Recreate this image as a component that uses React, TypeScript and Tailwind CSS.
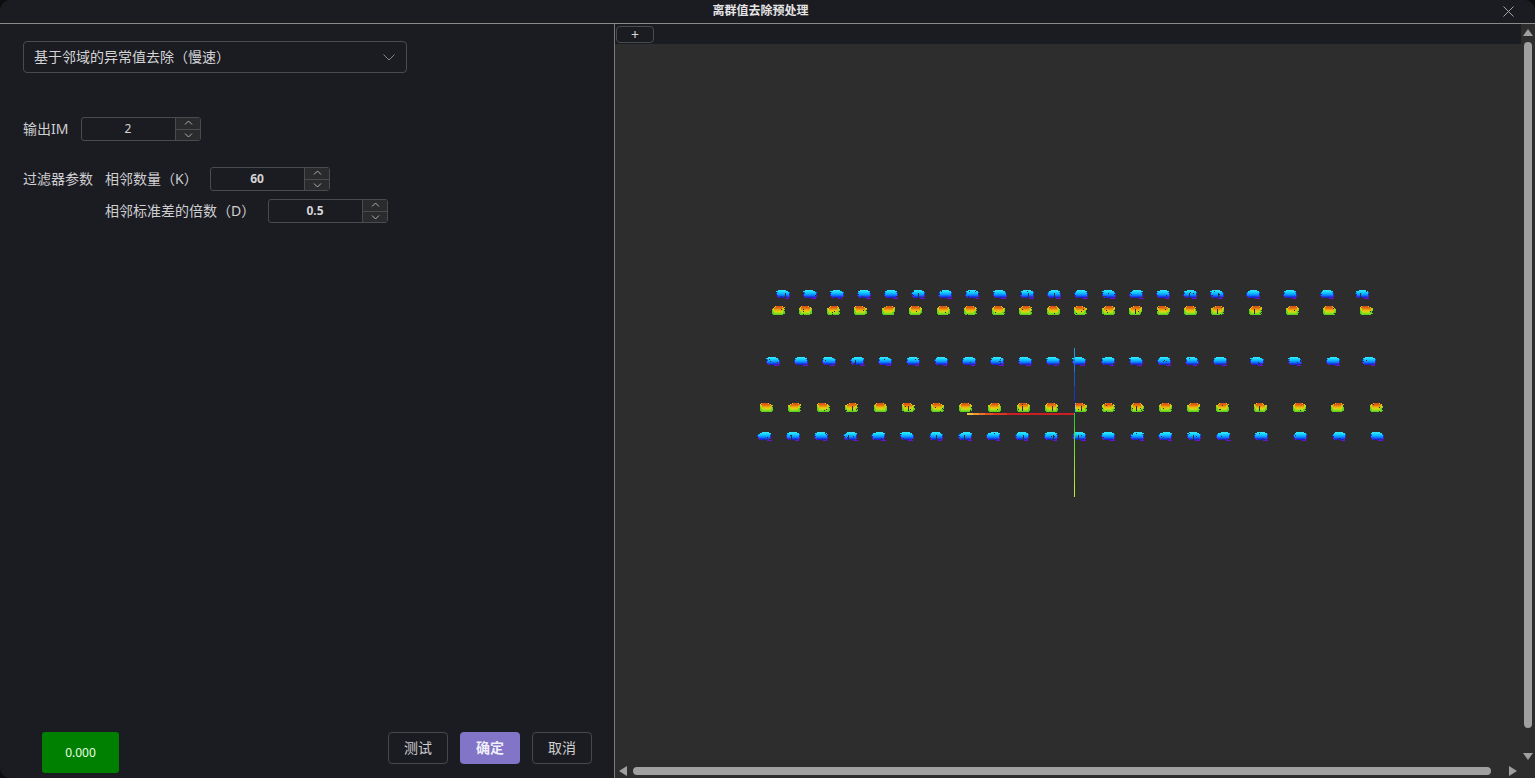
import React from "react";

const F = { fontFamily: '"Noto Sans", "Noto Sans CJK SC", sans-serif' };

const rows: { y: number; kind: "blue" | "orange"; xs: number[] }[] = [
  { y: 290, kind: "blue", xs: [783, 810, 837, 864, 891, 918, 945, 972, 1000, 1027, 1054, 1081, 1109, 1136, 1163, 1190, 1217, 1253, 1290, 1327, 1362] },
  { y: 306, kind: "orange", xs: [778, 805, 833, 860, 888, 915, 943, 970, 998, 1025, 1053, 1080, 1108, 1135, 1163, 1190, 1217, 1255, 1292, 1329, 1366] },
  { y: 357, kind: "blue", xs: [773, 801, 829, 857, 885, 913, 941, 969, 997, 1025, 1053, 1079, 1108, 1136, 1164, 1192, 1220, 1257, 1295, 1333, 1369] },
  { y: 403, kind: "orange", xs: [766, 794, 823, 851, 880, 908, 937, 965, 994, 1023, 1051, 1080, 1108, 1137, 1165, 1193, 1222, 1260, 1299, 1337, 1376] },
  { y: 432, kind: "blue", xs: [764, 793, 821, 850, 878, 907, 936, 965, 993, 1022, 1051, 1079, 1108, 1137, 1165, 1194, 1223, 1261, 1300, 1339, 1377] },
];

const blueColors = ["#30e4ff", "#20dcff", "#14ccff", "#10b4ff", "#0c98ff", "#0c74f8", "#1048e0", "#2420c8", "#6a14d0"];
const orangeColors = ["#d85414", "#dc6012", "#e47a10", "#ea9a10", "#eabc10", "#d8d010", "#b4dc18", "#88dc20", "#60d020"];
const blueWidths = [8, 12, 13, 14, 14, 14, 13, 11, 5];
const orangeWidths = [8, 11, 13, 13, 13, 13, 13, 13, 11];

function prng(seed: number) {
  let s = seed >>> 0;
  return () => {
    s = (s + 0x6d2b79f5) >>> 0;
    let t = Math.imul(s ^ (s >>> 15), 1 | s);
    t = (t + Math.imul(t ^ (t >>> 7), 61 | t)) ^ t;
    return ((t ^ (t >>> 14)) >>> 0) / 4294967296;
  };
}

function Blob({ cx, y, kind, seed }: { cx: number; y: number; kind: "blue" | "orange"; seed: number }) {
  const r = prng(seed);
  const colors = kind === "blue" ? blueColors : orangeColors;
  const widths = kind === "blue" ? blueWidths : orangeWidths;
  const skew = Math.round(r() * 2 - 1);
  const gap = r() < 0.3 ? Math.round(r() * 4 - 2) : 99;
  const rects: React.ReactNode[] = [];
  widths.forEach((w, row) => {
    const ww = w - (r() < 0.3 ? 1 : 0);
    const last = row === widths.length - 1;
    const left = cx - Math.floor(ww / 2) + (last && kind === "blue" ? 4 + skew : row <= 1 ? skew : 0);
    for (let i = 0; i < ww; i++) {
      const x = left + i;
      if (x - cx === gap && row > 2 && row < 8) continue;
      if (row > 0 && r() < 0.015) continue;
      const edge = Math.min(i, ww - 1 - i);
      let idx = row;
      if (kind === "orange" && edge < 1) idx = Math.min(8, row + 4);
      if (kind === "orange" && edge === 1 && row > 1) idx = Math.min(8, row + 2);
      if (kind === "blue" && edge < 1 && row > 1) idx = Math.min(8, row + 3);
      rects.push(<rect key={`${row}-${i}`} x={x} y={y + row} width={1} height={1} fill={colors[idx]} />);
    }
  });
  return <g>{rects}</g>;
}

const xAxis = [
  { x: 967, w: 6, c: "#f0c040" },
  { x: 973, w: 6, c: "#ec9a30" },
  { x: 979, w: 6, c: "#e87428" },
  { x: 985, w: 8, c: "#e05020" },
  { x: 993, w: 14, c: "#d83820" },
  { x: 1007, w: 67, c: "#c82020" },
];
const zAxis = [
  { y: 348, h: 12, c: "#2098e0" },
  { y: 360, h: 12, c: "#1878d8" },
  { y: 372, h: 14, c: "#1458d0" },
  { y: 386, h: 14, c: "#1438c8" },
  { y: 400, h: 13, c: "#1420c0" },
];
const yAxis = [
  { y: 413, h: 14, c: "#30cc30" },
  { y: 427, h: 14, c: "#50d430" },
  { y: 441, h: 14, c: "#70dc30" },
  { y: 455, h: 14, c: "#88e030" },
  { y: 469, h: 14, c: "#a0e630" },
  { y: 483, h: 14, c: "#b8ec30" },
];

function PointCloud() {
  return (
    <svg viewBox="615 44 906 720" className="block h-full w-full" shapeRendering="crispEdges">
      {rows.map((row, ri) =>
        row.xs.map((x, i) => <Blob key={`${ri}-${i}`} cx={x} y={row.y} kind={row.kind} seed={ri * 100 + i + 7} />)
      )}
      {zAxis.map((s) => <rect key={s.y} x={1074} y={s.y} width={1} height={s.h} fill={s.c} />)}
      {yAxis.map((s) => <rect key={s.y} x={1074} y={s.y} width={1} height={s.h} fill={s.c} />)}
      {xAxis.map((s) => <rect key={s.x} x={s.x} y={413} width={s.w} height={2} fill={s.c} />)}
    </svg>
  );
}

function Spin({ value, bold }: { value: string; bold?: boolean }) {
  return (
    <div className="flex h-6 w-[120px] rounded-[3px] border border-[#4a4b4f]">
      <div className={`flex flex-1 items-center justify-center pr-px text-xs text-[#d4d4d6] ${bold ? "font-bold" : ""}`}>{value}</div>
      <div className="flex w-[25px] flex-col border-l border-[#4a4b4f] bg-[#2a2b2d]">
        <div className="flex flex-1 items-center justify-center border-b border-[#4a4b4f]">
          <svg width="9" height="6" viewBox="0 0 9 6" fill="none" stroke="#b0b0b2" strokeWidth="1">
            <path d="M1 4.5 L4.5 1 L8 4.5" />
          </svg>
        </div>
        <div className="flex flex-1 items-center justify-center">
          <svg width="9" height="6" viewBox="0 0 9 6" fill="none" stroke="#b0b0b2" strokeWidth="1">
            <path d="M1 1.5 L4.5 5 L8 1.5" />
          </svg>
        </div>
      </div>
    </div>
  );
}

function Btn({ children, primary }: { children: React.ReactNode; primary?: boolean }) {
  return (
    <div
      className={`flex h-8 w-[60px] items-center justify-center rounded-[4px] text-sm ${
        primary ? "bg-[#8274c6] font-bold text-[#f0eefa]" : "border border-[#47484c] text-[#cfcfd1]"
      }`}
    >
      {children}
    </div>
  );
}

export default function App() {
  return (
    <div className="h-screen w-full overflow-hidden bg-[#0d0d0f]" style={F}>
      <div className="flex h-full flex-col overflow-hidden rounded-t-[10px] rounded-bl-[10px] bg-[#1b1c22]">
        <header className="flex h-6 shrink-0 items-center border-b border-[#8a8a8a] pb-px pl-[18px] pr-[21px]">
          <div className="flex-1 text-center text-xs font-bold text-[#e4e4e6]">离群值去除预处理</div>
          <svg width="11" height="11" viewBox="0 0 11 11" stroke="#a4a4a8" strokeWidth="1" fill="none">
            <path d="M0.5 0.5 L10.5 10.5 M10.5 0.5 L0.5 10.5" />
          </svg>
        </header>

        <div className="flex min-h-0 flex-1">
          <aside className="flex w-[615px] shrink-0 flex-col border-r border-[#7a7a7a] pb-[5px] pl-[23px] pr-[22px] pt-[17px] text-sm text-[#cfcfd1]">
            <div className="flex h-8 w-[384px] items-center justify-between rounded-[4px] border border-[#4a4b4f] pl-[10px] pr-[11px]">
              <span className="text-[#d4d4d6]">{"基于邻域的异常值去除\uFF08慢速\uFF09"}</span>
              <svg width="12" height="7" viewBox="0 0 12 7" fill="none" stroke="#84848a" strokeWidth="1">
                <path d="M0.5 0.5 L6 6 L11.5 0.5" />
              </svg>
            </div>

            <div className="mt-11 flex items-center gap-3">
              <span className="w-[46px] whitespace-nowrap">输出IM</span>
              <Spin value="2" />
            </div>

            <div className="mt-[26px] flex items-start gap-3">
              <span className="flex h-6 w-[70px] items-center whitespace-nowrap">过滤器参数</span>
              <div className="flex flex-col gap-2">
                <div className="flex items-center gap-[20px]">
                  <span className="w-[85px] whitespace-nowrap">{"相邻数量\uFF08K\uFF09"}</span>
                  <Spin value="60" bold />
                </div>
                <div className="flex items-center gap-[20px]">
                  <span className="w-[143px] whitespace-nowrap">{"相邻标准差的倍数\uFF08D\uFF09"}</span>
                  <Spin value="0.5" bold />
                </div>
              </div>
            </div>

            <div className="mt-auto flex items-start justify-between pl-[19px]">
              <div className="flex h-[41px] w-[77px] items-center justify-center rounded-[3px] bg-[#008000] text-xs text-[#e8ffe0]">
                0.000
              </div>
              <div className="flex gap-3">
                <Btn>测试</Btn>
                <Btn primary>确定</Btn>
                <Btn>取消</Btn>
              </div>
            </div>
          </aside>

          <main className="flex min-w-0 flex-1 flex-col bg-[#2d2d2d]">
            <div className="flex min-h-0 flex-1">
              <div className="flex min-w-0 flex-1 flex-col">
                <div className="flex h-5 shrink-0 items-end bg-[#1b1c22] pl-px">
                  <div className="mb-px flex h-[17px] w-[38px] items-center justify-center rounded-[4px] border border-[#4a4b4f] text-sm leading-none text-[#d8d8da]">
                    +
                  </div>
                </div>
                <div className="min-h-0 flex-1">
                  <PointCloud />
                </div>
              </div>
              <div className="flex w-[14px] shrink-0 flex-col items-center pt-[5px]">
                <svg width="10" height="7" viewBox="0 0 10 7" fill="#a0a0a0">
                  <polygon points="5,0 10,7 0,7" />
                </svg>
                <div className="mt-[6px] h-[686px] w-2 rounded-full bg-[#a0a0a0]" />
                <svg className="mt-auto mb-[4px]" width="10" height="7" viewBox="0 0 10 7" fill="#a0a0a0">
                  <polygon points="0,0 10,0 5,7" />
                </svg>
              </div>
            </div>
            <div className="flex h-[14px] shrink-0 items-center pl-[4px] pr-[18px]">
              <svg width="8" height="10" viewBox="0 0 8 10" fill="#a0a0a0">
                <polygon points="8,0 8,10 0,5" />
              </svg>
              <div className="ml-[6px] h-2 w-[858px] rounded-full bg-[#a0a0a0]" />
              <svg className="ml-auto" width="8" height="10" viewBox="0 0 8 10" fill="#a0a0a0">
                <polygon points="0,0 8,5 0,10" />
              </svg>
            </div>
          </main>
        </div>
      </div>
    </div>
  );
}
